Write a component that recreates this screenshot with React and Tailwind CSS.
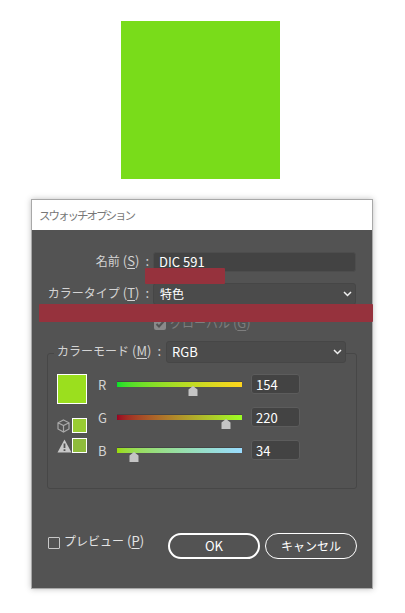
import React from "react";

const font = { fontFamily: '"Noto Sans CJK JP", "Liberation Sans", sans-serif' };

function Label({ text, k, colon = true }) {
  return (
    <span className="inline-flex items-baseline whitespace-nowrap text-[12px] mt-[-2px]">
      <span>{text}</span>
      <span className="ml-[3px] text-[13px]">
        (<span className="underline underline-offset-2">{k}</span>)
      </span>
      {colon && <span className="ml-[6px] text-[13px]">:</span>}
    </span>
  );
}

function Chevron() {
  return (
    <svg width="9" height="6" viewBox="0 0 9 6" className="shrink-0">
      <path d="M1 1l3.5 3.5L8 1" fill="none" stroke="#f0f0f0" strokeWidth="1.5" />
    </svg>
  );
}

function Slider({ label, value, gradient, pos }) {
  return (
    <div className="flex items-start h-[33px]">
      <span className="w-[20px] ml-[50px] text-[13px] leading-[17px] text-[#d4d4d4] mt-[-2px]">{label}</span>
      <div className="relative w-[125px] h-[5px] mt-[3px] ml-[-1px] border-t border-[#454545] box-content">
        <div className={"h-[5px] " + gradient} />
        <svg width="10" height="10" viewBox="0 0 10 10" className="absolute top-[4px]" style={{ left: pos }}>
          <path d="M5 0L9.5 3.5V10H0.5V3.5Z" fill="#c4c4c4" />
        </svg>
      </div>
      <div className="ml-[9px] mt-[-4px] w-[49px] h-[20px] rounded-[3px] bg-[#434343] border border-[#5c5c5c] pl-[4px] text-[13px] leading-[19px] text-white">
        {value}
      </div>
    </div>
  );
}

export default function App() {
  return (
    <div className="relative w-[405px] h-[613px] bg-white overflow-hidden" style={font}>
      <div className="ml-[121px] mt-[21px] w-[159px] h-[158px] bg-[#79dc1a]" />
      <div className="ml-[31px] mt-[20px] w-[342px] h-[390px] border border-[#a8a8a8] bg-[#535353] shadow-[0_0_6px_rgba(0,0,0,0.25)]">
        <div className="h-[30px] bg-white pl-[7px] text-[11.5px] tracking-[-2px] leading-[30px] text-[#777777]">スウォッチオプション</div>

        <div className="flex items-center mt-[22px] h-[20px]">
          <span className="w-[118px] pr-[1px] flex justify-end text-[#d4d4d4]"><Label text="名前" k="S" /></span>
          <div className="ml-[3px] w-[203px] h-[20px] rounded-[3px] bg-[#434343] border border-[#4d4d4d] pl-[5px] text-[13px] leading-[18px] text-white">DIC 591</div>
        </div>

        <div className="flex items-center mt-[11px] h-[22px]">
          <span className="w-[118px] pr-[1px] flex justify-end text-[#d4d4d4]"><Label text="カラータイプ" k="T" /></span>
          <div className="ml-[3px] w-[203px] h-[22px] rounded-[3px] bg-[#4b4b4b] border border-[#464646] pl-[6px] pr-[3px] flex items-center justify-between text-[12px] text-white">
            <span>特色</span>
            <Chevron />
          </div>
        </div>

        <div className="flex items-center mt-[9px] ml-[122px] h-[20px] text-[#7e7e7e]">
          <span className="w-[12px] h-[12px] rounded-[2px] bg-[#8a8a8a] flex items-center justify-center mr-[4px]">
            <svg width="10" height="10" viewBox="0 0 10 10">
              <path d="M1.5 5l2.5 2.5L8.5 2.5" fill="none" stroke="#535353" strokeWidth="2" />
            </svg>
          </span>
          <Label text="グローバル" k="G" colon={false} />
        </div>

        <div className="relative ml-[15px] mt-[19px] w-[310px] h-[136px] border border-[#474747] rounded-[3px]">
          <div className="absolute left-[6px] top-[-13px] flex items-center bg-[#535353] pl-[3px]">
            <span className="w-[109px] flex text-[#d4d4d4]"><Label text="カラーモード" k="M" /></span>
            <div className="w-[180px] h-[22px] rounded-[3px] bg-[#4b4b4b] border border-[#464646] pl-[5px] pr-[3px] flex items-center justify-between text-[13px] text-white">
              <span>RGB</span>
              <Chevron />
            </div>
          </div>

          <div className="relative pt-[24px]">
            <Slider label="R" value="154" gradient="bg-gradient-to-r from-[#00e02a] to-[#ffd51c]" pos={71} />
            <Slider label="G" value="220" gradient="bg-gradient-to-r from-[#9a0022] to-[#9aff22]" pos={104} />
            <Slider label="B" value="34" gradient="bg-gradient-to-r from-[#9adc00] to-[#9adcff]" pos={12} />

            <div className="absolute left-[9px] top-[20px] flex flex-col items-end w-[30px]">
              <div className="w-[30px] h-[30px] bg-[#9bdf1e] border border-white" />
              <div className="flex items-center mt-[14px]">
                <svg width="13" height="14" viewBox="0 0 13 14" className="mr-[2px]">
                  <path d="M6.5 1L12 3.8V10L6.5 13L1 10V3.8ZM1 3.8L6.5 6.6L12 3.8M6.5 6.6V13" fill="none" stroke="#a8a8a8" strokeWidth="1.2" />
                </svg>
                <div className="w-[15px] h-[15px] bg-[#99cc33] border border-white" />
              </div>
              <div className="flex items-center mt-[5px]">
                <svg width="15" height="14" viewBox="0 0 15 14">
                  <path d="M7.5 0.5L14.5 13.5H0.5Z" fill="#c8c8c8" />
                  <path d="M7.5 4.5V9M7.5 10.2V12" stroke="#535353" strokeWidth="1.8" />
                </svg>
                <div className="w-[15px] h-[15px] bg-[#8fbc3c] border border-white" />
              </div>
            </div>
          </div>
        </div>

        <div className="flex items-start mt-[44px] ml-[16px]">
          <span className="w-[12px] h-[12px] mt-[4px] border border-[#c8c8c8] rounded-[1px] mr-[4px]" />
          <span className="w-[104px] flex text-[#e4e4e4]"><Label text="プレビュー" k="P" colon={false} /></span>
          <div className="w-[92px] h-[26px] rounded-full border-2 border-white flex items-center justify-center text-[13px] text-white">OK</div>
          <div className="ml-[5px] w-[92px] h-[26px] rounded-full border border-white flex items-center justify-center text-[12px] text-white">キャンセル</div>
        </div>
      </div>

      <div className="absolute left-[145px] top-[268px] w-[80px] h-[16px] bg-[#96323d] rounded-[1px]" />
      <div className="absolute left-[39px] top-[304px] w-[334px] h-[18px] bg-[#96323d] rounded-[1px]" />
    </div>
  );
}
